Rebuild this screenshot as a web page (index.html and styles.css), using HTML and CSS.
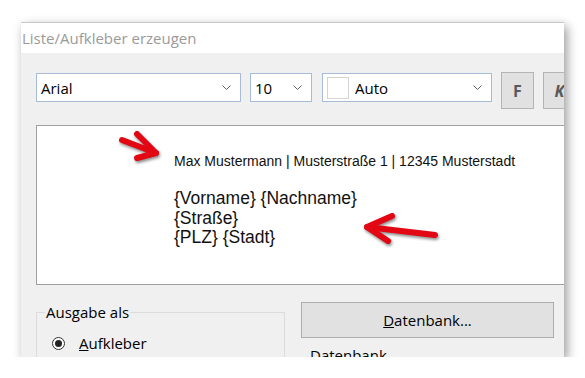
FILE: index.html
```html
<!DOCTYPE html>
<html lang="de">
<head>
  <meta charset="UTF-8" />
  <title>Liste/Aufkleber erzeugen</title>
  <link rel="stylesheet" href="styles.css">
</head>
<body>
  <div class="dialog">
    <div class="titlebar">Liste/Aufkleber erzeugen</div>

    <div class="content">
      <div class="toolbar">
        <div class="combo combo-font">
          <span class="combo-text">Arial</span>
          <svg class="chevron" width="9" height="5" viewBox="0 0 9 5"><polyline points="0.5,0.5 4.5,4.5 8.5,0.5" /></svg>
        </div>
        <div class="combo combo-size">
          <span class="combo-text">10</span>
          <svg class="chevron" width="9" height="5" viewBox="0 0 9 5"><polyline points="0.5,0.5 4.5,4.5 8.5,0.5" /></svg>
        </div>
        <div class="combo combo-color">
          <span class="swatch"></span>
          <span class="combo-text">Auto</span>
          <svg class="chevron" width="9" height="5" viewBox="0 0 9 5"><polyline points="0.5,0.5 4.5,4.5 8.5,0.5" /></svg>
        </div>
        <button class="tool-btn bold">F</button>
        <button class="tool-btn italic">K</button>
      </div>

      <div class="preview">
        <div class="sender">Max Mustermann | Musterstraße 1 | 12345 Musterstadt</div>
        <div class="address">
          <div>{Vorname} {Nachname}</div>
          <div>{Straße}</div>
          <div>{PLZ} {Stadt}</div>
        </div>
        <svg class="arrows" width="560" height="160" viewBox="0 0 560 160">
          <g class="arrow">
            <line x1="86" y1="15" x2="120" y2="28" />
            <polyline points="101,9 120,28 101,33" />
          </g>
          <g class="arrow">
            <line x1="399" y1="110" x2="331" y2="102" />
            <polyline points="356,91 331,102 352,116" />
          </g>
        </svg>
      </div>

      <div class="bottom">
        <fieldset class="group">
          <legend>Ausgabe als</legend>
          <label class="radio-row">
            <span class="radio"><span class="dot"></span></span>
            <span><u>A</u>ufkleber</span>
          </label>
        </fieldset>
        <div class="db-col">
          <button class="db-btn"><u>D</u>atenbank...</button>
          <div class="db-label">Datenbank</div>
        </div>
      </div>
    </div>
  </div>
</body>
</html>
```

FILE: styles.css
```css
body {
  margin: 0;
  padding: 22px 0 0 21px;
  background: #fff;
  font-family: 'Open Sans', 'Noto Sans', sans-serif;
  font-size: 14px;
  color: #000;
}

.dialog {
  position: relative;
  width: 543px;
  height: 335px;
  background: #f0f0f0;
  border-top: 1px solid #c8c8c8;
  box-sizing: border-box;
  overflow: hidden;
  box-shadow: 3px 4px 10px rgba(0,0,0,0.4);
}

.dialog::before {
  content: "";
  position: absolute;
  top: -1px;
  left: 0;
  width: 31px;
  height: 1px;
  background: #6e6e6e;
}

.dialog::after {
  content: "";
  position: absolute;
  top: -1px;
  left: 39px;
  width: 1px;
  height: 1px;
  background: #6e6e6e;
}

.titlebar {
  height: 30px;
  line-height: 30px;
  background: #fff;
  color: #9a9a9a;
  padding-left: 1px;
  font-size: 15px;
}

.content {
  padding: 19px 0 0 15px;
}

.toolbar {
  display: flex;
  align-items: flex-start;
  gap: 9px;
}

.combo {
  display: flex;
  flex-shrink: 0;
  align-items: center;
  height: 29px;
  margin-top: 1px;
  box-sizing: border-box;
  background: #fff;
  border: 1px solid #a7bcd8;
  padding: 0 9px 0 4px;
}

.combo-font { width: 205px; }
.combo-size { width: 62px; }
.combo-color { width: 170px; margin-left: 1px; }

.combo-text {
  flex: 1;
  font-size: 15px;
}

.chevron {
  fill: none;
  stroke: #606060;
  stroke-width: 1;
}

.swatch {
  width: 20px;
  height: 20px;
  border: 1px solid #d4d4d4;
  background: #fff;
  margin-right: 6px;
}

.tool-btn {
  width: 33px;
  height: 37px;
  flex-shrink: 0;
  background: #e1e1e1;
  border: 1px solid #b4b4b4;
  color: #5a5a5a;
  font-family: 'Open Sans', sans-serif;
  font-size: 16px;
  font-weight: bold;
  padding: 0;
}

.tool-btn.italic {
  font-style: italic;
}

.preview {
  position: relative;
  width: 560px;
  height: 160px;
  margin-top: 16px;
  box-sizing: border-box;
  background: #fff;
  border: 1px solid #a0a0a0;
  padding: 27px 0 0 137px;
  font-family: 'Liberation Sans', Arial, sans-serif;
  color: #111;
}

.sender {
  font-size: 14px;
  line-height: 16px;
}

.address {
  margin-top: 20px;
  font-size: 17.5px;
  line-height: 19.5px;
}

.arrows {
  position: absolute;
  left: -1px;
  top: -1px;
}

.arrow {
  fill: none;
  stroke: #e30613;
  stroke-width: 6;
  stroke-linecap: round;
  stroke-linejoin: round;
  filter: drop-shadow(1px 2px 1.5px rgba(0,0,0,0.45));
}

.bottom {
  display: flex;
  align-items: flex-start;
  margin-top: 17px;
}

.group {
  width: 249px;
  height: 80px;
  margin: 1px 0 0;
  padding: 0;
  box-sizing: border-box;
  border: 1px solid #dcdcdc;
}

.group legend {
  margin-left: 8px;
  padding: 0 1px;
  line-height: 19px;
  font-size: 15px;
}

.radio-row {
  display: flex;
  align-items: center;
  gap: 14px;
  margin-top: 12px;
  padding-left: 15px;
  line-height: 19px;
  font-size: 15px;
}

.radio {
  display: flex;
  align-items: center;
  justify-content: center;
  width: 13px;
  height: 13px;
  box-sizing: border-box;
  border: 1px solid #333;
  border-radius: 50%;
  background: #fff;
}

.radio .dot {
  width: 7px;
  height: 7px;
  border-radius: 50%;
  background: #222;
}

.db-col {
  margin-left: 16px;
}

.db-btn {
  display: block;
  width: 253px;
  height: 36px;
  background: #e1e1e1;
  border: 1px solid #adadad;
  font-family: 'Open Sans', sans-serif;
  font-size: 15px;
  color: #000;
  padding: 0;
}

.db-label {
  margin: 8px 0 0 9px;
  line-height: 19px;
  font-size: 15px;
}
```
